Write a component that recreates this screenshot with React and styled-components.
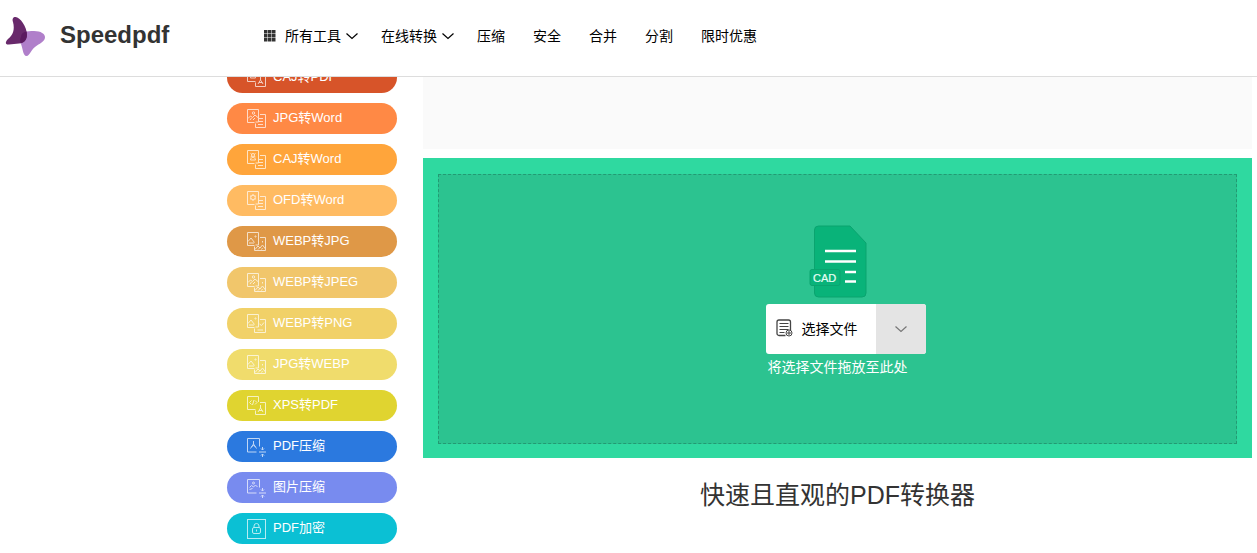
import React from "react";
import styled, { createGlobalStyle } from "styled-components";

const GlobalStyle = createGlobalStyle`
  * {
    box-sizing: border-box;
  }

  body {
    margin: 0;
    background: #fff;
    color: #333;
    font-family: "Liberation Sans", "Noto Sans CJK SC", sans-serif;
    font-size: 14px;
  }

  a {
    color: inherit;
    text-decoration: none;
  }

  button {
    border: 0;
    padding: 0;
    background: none;
    color: inherit;
    font: inherit;
    cursor: pointer;
  }

  svg {
    display: block;
    flex: none;
  }
`;

const Page = styled.div`
  overflow: hidden;
`;

const Header = styled.header`
  position: relative;
  z-index: 2;
  display: flex;
  align-items: center;
  height: 77px;
  padding: 0 5px 4px;
  background: #fff;
  border-bottom: 1px solid #ddd;
`;

const Brand = styled.a`
  display: flex;
  align-items: center;
  gap: 14px;
  width: 259px;
  padding-bottom: 2px;
  color: #333;
  font-size: 24px;
  font-weight: 700;
  line-height: 40px;
`;

const Nav = styled.nav`
  display: flex;
  align-items: center;
  gap: 28px;
  color: #000;
`;

const NavItem = styled.a`
  display: flex;
  align-items: center;
  line-height: 20px;
  white-space: nowrap;
`;

const NavButton = styled.button`
  display: flex;
  align-items: center;
  gap: 5px;
  margin-right: -5px;
  line-height: 20px;
  white-space: nowrap;

  .grid {
    margin-right: 4px;
  }
`;

const Body = styled.div`
  display: flex;
  gap: 26px;
  padding: 0 5px 0 227px;
`;

const Sidebar = styled.aside`
  display: flex;
  flex: none;
  flex-direction: column;
  gap: 10px;
  width: 170px;
  margin-top: -15px;
`;

const ToolLink = styled.a`
  display: flex;
  align-items: center;
  gap: 6px;
  height: 31px;
  padding-left: 20px;
  border-radius: 16px;
  background: ${(props) => props.$color};
  color: #fff;
  font-size: 13px;
  line-height: 20px;

  span {
    padding-bottom: 2px;
  }
`;

const Main = styled.main`
  flex: 1;
  min-width: 0;
`;

const Banner = styled.div`
  height: 72px;
  margin-bottom: 9px;
  background: #fafafa;
`;

const UploadPanel = styled.section`
  padding: 16px 15px 14px;
  background: #2fd9a0;
`;

const DropZone = styled.div`
  display: flex;
  flex-direction: column;
  align-items: center;
  height: 270px;
  padding-top: 50px;
  border: 1px dashed #239a73;
  background: #2cc390;
`;

const DropContent = styled.div`
  width: 144px;

  > svg {
    margin: 0 auto 5px 43px;
  }

  p {
    margin: 3px 0 0;
    padding-left: 2px;
    color: #fff;
    line-height: 20px;
    white-space: nowrap;
  }
`;

const FilePicker = styled.div`
  display: flex;
  width: 160px;
  height: 50px;
  overflow: hidden;
  border-radius: 3px;
  background: #fff;
`;

const ChooseButton = styled.button`
  display: flex;
  align-items: center;
  flex: 1;
  gap: 8px;
  padding: 0 0 3px 10px;
  color: #000;
  white-space: nowrap;
`;

const MoreButton = styled.button`
  display: flex;
  align-items: center;
  justify-content: center;
  width: 50px;
  background: #e4e4e4;
  color: #777;
`;

const Title = styled.h1`
  margin: 17px 0 0;
  color: #333;
  font-size: 25px;
  font-weight: 400;
  line-height: 40px;
  text-align: center;
`;

const tools = [
  { name: "CAJ转PDF", color: "#d75429", from: "caj", to: "pdf" },
  { name: "JPG转Word", color: "#ff8945", from: "image", to: "word" },
  { name: "CAJ转Word", color: "#ffa53b", from: "caj", to: "word" },
  { name: "OFD转Word", color: "#ffbb62", from: "ofd", to: "word" },
  { name: "WEBP转JPG", color: "#df9847", from: "hills", to: "jpg" },
  { name: "WEBP转JPEG", color: "#f1c66b", from: "image", to: "jpg" },
  { name: "WEBP转PNG", color: "#f1d168", from: "hills", to: "png" },
  { name: "JPG转WEBP", color: "#f0dc6c", from: "hills", to: "jpg" },
  { name: "XPS转PDF", color: "#e0d430", from: "xps", to: "pdf" },
  { name: "PDF压缩", color: "#2b79df", from: "acrobat", to: "compress" },
  { name: "图片压缩", color: "#788bef", from: "picture", to: "compress" },
  { name: "PDF加密", color: "#0bc0d4", from: "lock" },
];

const sources = {
  caj: (
    <>
      <circle cx="6" cy="5" r="1.5" />
      <path d="M3.5 3.500l1.500 1M8.500 3.500l-1.500 1M3.500 7l1.500-1M8.500 7L7 6M3.500 10c0-3.500 5-3.500 5 0z" />
    </>
  ),
  image: (
    <>
      <circle cx="6.500" cy="4" r="1.200" />
      <path d="M1 9.500l2.500-2.500 2 1.500L8 6l3.500 3M3 11l1.500-2M6 11l2-2" />
    </>
  ),
  hills: (
    <>
      <circle cx="8.500" cy="4.500" r=".6" />
      <path d="M1 9.500L4 6l3.500 4.500M2 11h5" />
    </>
  ),
  ofd: (
    <>
      <circle cx="6" cy="6.500" r="2.300" />
      <path d="M6 3v1.500M6 8.500V10M3 4.800l1.300.7M7.700 7.500l1.300.7M3 8.200l1.300-.7M7.700 5.500l1.300-.7" />
    </>
  ),
  xps: <path d="M4.500 4.500l-2 2 2 2M8 4.500l2 2-2 2M7 4l-1.500 5" />,
};

const targets = {
  word: <path d="M13 5.500h5.500v13h-10v-4M11.500 9.500H16M11.500 12.500H16M11 15.500h5" />,
  pdf: <path d="M13 6.500h5.500v12h-10v-4M13.500 9v3l-2.500 4M13.500 12l2.500 4M12 14.500h3.500" />,
  jpg: <path d="M13 5.500h5.500v13H7.500v-4M8 17.500l3-3.500 2 2 2.500-3 3 4M11 17.500l1.500-1.500M15.500 9v1.500M14.500 17.500l1-1.500" />,
  png: <path d="M13 5.500h5.500v13h-11v-4M10.500 16h5.500M12.500 10l2 1.500 2.500-3" />,
};

const ToolIcon = ({ from, to }) => {
  let drawing;
  if (from === "lock") {
    drawing = (
      <>
        <rect x=".5" y=".5" width="18" height="19" />
        <rect x="5.500" y="8.500" width="8" height="6" rx="1.500" />
        <path d="M7 8.500V7a2.500 2.500 0 0 1 5 0v1.500M9.500 10.500v2" />
      </>
    );
  } else if (to === "compress") {
    drawing = (
      <>
        <path d="M9.500 15H.5V1.500h12v8" />
        {from === "acrobat" ? (
          <path d="M6.500 4v3l-3 4.500M6.500 7l3 4.500M4.500 9.500l2-1 2 1" />
        ) : (
          <>
            <circle cx="6.500" cy="5" r="1" />
            <path d="M2.500 9.500l2-2 2 1.500 2-2L10.500 9M2.500 11.500l3-1" />
          </>
        )}
        <path d="M12 15h7M15.500 10v3M14 11.500l1.500 1.500 1.500-1.500M15.500 20v-3M14 18.500l1.500-1.500 1.500 1.500" />
      </>
    );
  } else {
    drawing = (
      <>
        <path d={to === "pdf" ? "M8.500 13.500h-8V.5h11V6" : "M7.500 13.500h-7V.5h11V13h-3"} />
        {sources[from]}
        {targets[to]}
      </>
    );
  }
  return (
    <svg width="20" height="20" viewBox="0 0 20 20" fill="none" stroke="#fff" opacity=".7" aria-hidden="true">
      {drawing}
    </svg>
  );
};

const Chevron = () => (
  <svg width="12" height="8" viewBox="0 0 12 8" fill="none" stroke="currentColor" strokeWidth="1.200" aria-hidden="true">
    <path d="M.5 1.500L6 6.500l5.500-5" />
  </svg>
);

const GridIcon = () => (
  <svg className="grid" width="12" height="12" viewBox="0 0 12 12" fill="#333" aria-hidden="true">
    {[0, 4, 8].map((y) =>
      [0, 4, 8].map((x) => <rect key={`${x}-${y}`} x={x} y={y} width="3.500" height="3.500" />)
    )}
  </svg>
);

const Logo = () => (
  <svg width="41" height="41" viewBox="0 0 41 41" aria-hidden="true">
    <path d="M16 22C15.500 17 22 16 29 16C36 16 40 19 40 22C40 26 36 28 32 30.500C26 34 25 41 21.500 41C18 41 18 34 16 29C15 26 15 24 16 22Z" fill="#b07fca" />
    <path d="M8 7C7 4 8 2 10.500 2C15 2 22 12 22 20C22 25 19 28 14 28.500L4 29.500C0 30 0 27 3 24C8 20 10 15 8 7Z" fill="#68296b" />
    <path d="M16 22C16 19 18 17 21.500 16.500C23 23 20 27.500 15.500 28.200C15 25 15 24 16 22Z" fill="#5b1a60" />
  </svg>
);

const CadIcon = () => (
  <svg width="60" height="74" viewBox="0 0 60 74" aria-hidden="true">
    <path d="M9.500 1H41l16 17v50a4 4 0 0 1-4 4H9.500a4 4 0 0 1-4-4V5a4 4 0 0 1 4-4z" fill="#09b379" stroke="#0aa46f" />
    <path d="M16 26h31M16 36.500h31M36 47h11M36 56.500h11" stroke="#fff" strokeWidth="2.500" />
    <rect x="1" y="44.500" width="30" height="16" rx="2" fill="#09b379" stroke="#0aa46f" />
    <text x="4" y="57" fill="#e7fff6" stroke="#e7fff6" strokeWidth=".2" fontSize="11" fontFamily="Liberation Sans, sans-serif">CAD</text>
  </svg>
);

const AddFileIcon = () => (
  <svg width="18" height="18" viewBox="0 0 18 18" fill="none" stroke="#444" aria-hidden="true">
    <path d="M9.500 16.500H3A2 2 0 0 1 1 14.500V3a2 2 0 0 1 2-2h9.500a2 2 0 0 1 2 2v8" strokeWidth="1.300" />
    <path d="M3.500 4.500h9M3.500 7.500h9M3.500 10.500h9M3.500 13.500h5" />
    <circle cx="13" cy="14" r="3" fill="#fff" />
    <path d="M11 14h4M13 12v4" />
  </svg>
);

function App() {
  return (
    <Page>
      <GlobalStyle />
      <Header>
        <Brand href="#">
          <Logo />
          Speedpdf
        </Brand>
        <Nav>
          <NavButton type="button">
            <GridIcon />
            所有工具
            <Chevron />
          </NavButton>
          <NavButton type="button">
            在线转换
            <Chevron />
          </NavButton>
          <NavItem href="#">压缩</NavItem>
          <NavItem href="#">安全</NavItem>
          <NavItem href="#">合并</NavItem>
          <NavItem href="#">分割</NavItem>
          <NavItem href="#">限时优惠</NavItem>
        </Nav>
      </Header>
      <Body>
        <Sidebar>
          {tools.map((tool) => (
            <ToolLink href="#" key={tool.name} $color={tool.color}>
              <ToolIcon from={tool.from} to={tool.to} />
              <span>{tool.name}</span>
            </ToolLink>
          ))}
        </Sidebar>
        <Main>
          <Banner />
          <UploadPanel>
            <DropZone>
              <DropContent>
                <CadIcon />
                <FilePicker>
                  <ChooseButton type="button">
                    <AddFileIcon />
                    选择文件
                  </ChooseButton>
                  <MoreButton type="button" aria-label="更多">
                    <Chevron />
                  </MoreButton>
                </FilePicker>
                <p>将选择文件拖放至此处</p>
              </DropContent>
            </DropZone>
          </UploadPanel>
          <Title>快速且直观的PDF转换器</Title>
        </Main>
      </Body>
    </Page>
  );
}

export default App;
